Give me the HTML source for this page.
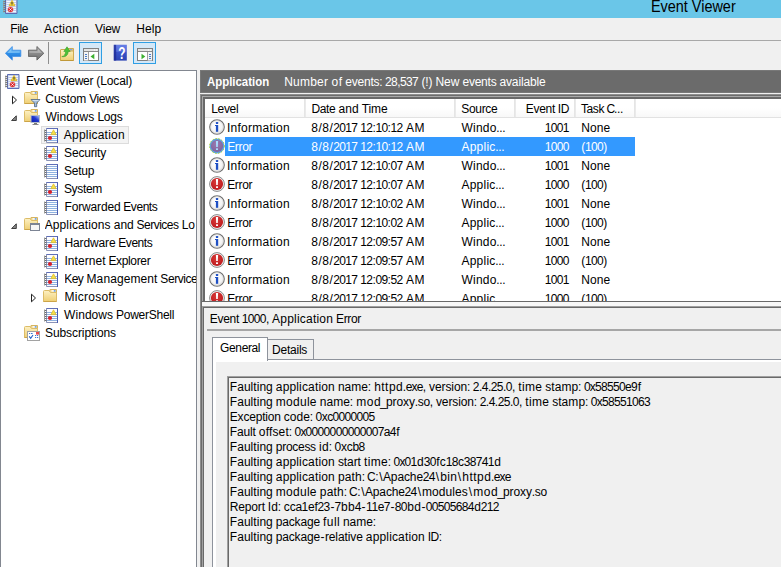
<!DOCTYPE html>
<html><head><meta charset="utf-8"><title>Event Viewer</title>
<style>
*{box-sizing:border-box;margin:0;padding:0}
html,body{width:781px;height:567px;overflow:hidden;background:#f0f0f0}
body{font-family:"Liberation Sans",sans-serif;font-size:12px;color:#000;position:relative}
.abs{position:absolute}
.ic{position:absolute;display:block}
.t{position:absolute;white-space:nowrap;transform-origin:0 0}
.tbbtn{position:absolute;width:23px;height:22px;top:42px;background:#d4e8f8;border:1px solid #2f9fe4}
</style></head><body>
<svg width="0" height="0" style="position:absolute"><defs>
<linearGradient id="gf" x1="0" y1="0" x2="0" y2="1"><stop offset="0" stop-color="#fdf1c4"/><stop offset="1" stop-color="#efcf74"/></linearGradient>
<radialGradient id="gi" cx=".4" cy=".35" r=".8"><stop offset="0" stop-color="#ffffff"/><stop offset=".6" stop-color="#f4f4f4"/><stop offset="1" stop-color="#c8c8c8"/></radialGradient>
<radialGradient id="ge" cx=".45" cy=".35" r=".8"><stop offset="0" stop-color="#d83a38"/><stop offset="1" stop-color="#b81418"/></radialGradient>
<radialGradient id="gs" cx=".45" cy=".35" r=".8"><stop offset="0" stop-color="#9a7ab0"/><stop offset="1" stop-color="#7a5e98"/></radialGradient>
<linearGradient id="gb" x1="0" y1="0" x2="0" y2="1"><stop offset="0" stop-color="#7cc4f8"/><stop offset=".5" stop-color="#2f8fe8"/><stop offset="1" stop-color="#1a6fd0"/></linearGradient>
<linearGradient id="gg" x1="0" y1="0" x2="0" y2="1"><stop offset="0" stop-color="#b4b4b4"/><stop offset=".5" stop-color="#8a8a8a"/><stop offset="1" stop-color="#6e6e6e"/></linearGradient>
<linearGradient id="gh" x1="0" y1="0" x2="0" y2="1"><stop offset="0" stop-color="#5c78e4"/><stop offset=".5" stop-color="#3852c8"/><stop offset="1" stop-color="#2c44b4"/></linearGradient>
<linearGradient id="gm" x1="0" y1="1" x2="1" y2="0"><stop offset="0" stop-color="#0c1ca8"/><stop offset=".55" stop-color="#2038d0"/><stop offset="1" stop-color="#b8d0f8"/></linearGradient>
</defs></svg>
<div class="abs" style="left:0;top:0;width:781px;height:18px;background:#6ac6e8"></div>

<svg class="ic" style="left:3px;top:-2px" width="16" height="16" viewBox="0 0 16 16"><path d="M2.500 1.500h11.500v14h-11.500z" fill="#c2cfec" stroke="#5c6cb4"/><path d="M3.500 3.500h9.500M3.500 5.500h9.500M3.500 7.500h9.500M3.500 9.500h9.500M3.500 11.500h9.500M3.500 13.500h9.500" stroke="#f2f6ff" stroke-width="1"/><path d="M0 3.500h2.500M0 5.500h2.500M0 7.500h2.500M0 9.500h2.500M0 11.500h2.500M0 13.500h2.500" stroke="#6e6e6e" stroke-width="1"/><path d="M.8 2.500v12" stroke="#9a9a9a" stroke-width="1"/><path d="M9 2.300l3 5.400h-6z" fill="#f6d838" stroke="#d8ac18" stroke-width=".7" stroke-linejoin="round"/><rect x="8.500" y="4" width="1" height="2" fill="#333"/><rect x="8.500" y="6.400" width="1" height=".8" fill="#333"/><circle cx="7.500" cy="11.500" r="2.600" fill="#d8262c" stroke="#e87070" stroke-width=".5"/><path d="M6.400 10.400l2.200 2.200M8.600 10.400l-2.200 2.200" stroke="#fff" stroke-width=".9"/></svg>
<div class="t" style="left:651.00px;top:-3.04px;font-size:16px;line-height:20px;height:20px;transform:scaleX(0.9011)">Event Viewer</div>
<div class="t" style="left:10.30px;top:21.44px;line-height:16px;height:16px"><span style="letter-spacing:-0.34px;margin:0 0.17px 0 -0.17px">File</span></div>
<div class="t" style="left:44.10px;top:21.44px;line-height:16px;height:16px"><span style="letter-spacing:0.28px">Action</span></div>
<div class="t" style="left:95.10px;top:21.44px;line-height:16px;height:16px"><span style="letter-spacing:-0.20px">View</span></div>
<div class="t" style="left:136.30px;top:21.44px;line-height:16px;height:16px"><span style="letter-spacing:0.08px">Help</span></div>
<div class="abs" style="left:0;top:40px;width:781px;height:1px;background:#a8a8a8"></div>
<svg class="ic" style="left:5px;top:46px" width="17" height="15" viewBox="0 0 17 15"><path d="M.4 7.300L7.300.5v3.700H15.800v6.200H7.300v3.700z" fill="url(#gb)" stroke="#3a8ee8" stroke-width=".8" stroke-linejoin="round"/><path d="M2.200 7l4.200-4.200v2.400h8.400v1.600z" fill="#a8e0ff" opacity=".55"/></svg>
<svg class="ic" style="left:28px;top:46px" width="17" height="15" viewBox="0 0 17 15"><path d="M15.800 7.300L8.900.5v3.700H.4v6.200H8.900v3.700z" fill="url(#gg)" stroke="#606060" stroke-width=".9" stroke-linejoin="round"/><path d="M14 7l-4.200-4.200v2.400H1.400v1.600z" fill="#d0d0d0" opacity=".5"/></svg>
<div class="abs" style="left:48px;top:42px;width:1px;height:22px;background:#8e8e8e"></div>
<svg class="ic" style="left:59px;top:45px" width="16" height="16" viewBox="0 0 16 16"><path d="M8 3.500h6.500v4h-7z" fill="#f1d585" stroke="#d0aa50"/><rect x="11" y="4.200" width="2.500" height="1.200" fill="#6a9af0"/><path d="M1.500 5q0-.5.500-.5h4.500l1.500 1.500h6.500v9.500h-13z" fill="url(#gf)" stroke="#d0aa50"/><path d="M1.500 15.500h13" stroke="#c09838"/><path d="M2.800 11.600c2.400-.3 3.600-2 3.900-5.200h-1.900l3.200-4.600 3.200 4.600h-1.900c-.4 4-2.700 5.800-6.500 5.200z" fill="#4cc038" stroke="#38a028" stroke-width=".6"/></svg>
<div class="tbbtn" style="left:79px"></div>
<svg class="ic" style="left:83px;top:48px" width="16" height="13" viewBox="0 0 16 13"><rect x=".5" y=".5" width="15" height="12" fill="#fff" stroke="#808080"/><rect x="1" y="1" width="14" height="2.500" fill="#e4e4e4"/><path d="M11 2h1M13 2h1" stroke="#fff"/><path d="M1 3.500h14" stroke="#8a8a8a"/><path d="M5.500 4v8.500" stroke="#a0a0a0"/><rect x="1" y="4" width="4" height="8.500" fill="#f4f4f4"/><path d="M2 6.500h2M2 8.500h2M2 10.500h2" stroke="#4a7cc8"/><path d="M11.300 5.800v5.400l-3.800-2.700z" fill="#3cb030"/></svg>
<svg class="ic" style="left:113px;top:44px" width="15" height="17" viewBox="0 0 15 17"><rect x=".8" y=".8" width="13" height="15.800" fill="url(#gh)"/><rect x=".8" y=".8" width="2.400" height="15.800" fill="#1c2890" opacity=".7"/><rect x="3.200" y=".8" width="10.600" height="7" fill="#7088e8" opacity=".45"/><text transform="translate(8.800 14.600) scale(.74 1)" font-family="Liberation Sans,sans-serif" font-weight="bold" font-size="16" fill="#fff" text-anchor="middle">?</text></svg>
<div class="tbbtn" style="left:133px"></div>
<svg class="ic" style="left:137px;top:48px" width="16" height="13" viewBox="0 0 16 13"><rect x=".5" y=".5" width="15" height="12" fill="#fff" stroke="#808080"/><rect x="1" y="1" width="14" height="2.500" fill="#e4e4e4"/><path d="M11 2h1M13 2h1" stroke="#fff"/><path d="M1 3.500h14" stroke="#8a8a8a"/><path d="M10.500 4v8.500" stroke="#a0a0a0"/><rect x="11" y="4" width="4" height="8.500" fill="#f4f4f4"/><path d="M12 6.500h2M12 8.500h2M12 10.500h2" stroke="#4a7cc8"/><path d="M4.500 5.800v5.400l3.800-2.700z" fill="#3cb030"/></svg>

<div class="abs" style="left:0;top:70px;width:197px;height:500px;background:#fff;border:1px solid #828790"></div>
<div class="abs" style="left:41px;top:126px;width:88px;height:18px;background:#f3f3f3;border:1px solid #dcdcdc"></div>
<svg class="ic" style="left:5px;top:73px" width="16" height="16" viewBox="0 0 16 16"><path d="M2.500 1.500h11.500v14h-11.500z" fill="#c2cfec" stroke="#5c6cb4"/><path d="M3.500 3.500h9.500M3.500 5.500h9.500M3.500 7.500h9.500M3.500 9.500h9.500M3.500 11.500h9.500M3.500 13.500h9.500" stroke="#f2f6ff" stroke-width="1"/><path d="M0 3.500h2.500M0 5.500h2.500M0 7.500h2.500M0 9.500h2.500M0 11.500h2.500M0 13.500h2.500" stroke="#6e6e6e" stroke-width="1"/><path d="M.8 2.500v12" stroke="#9a9a9a" stroke-width="1"/><path d="M9 2.300l3 5.400h-6z" fill="#f6d838" stroke="#d8ac18" stroke-width=".7" stroke-linejoin="round"/><rect x="8.500" y="4" width="1" height="2" fill="#333"/><rect x="8.500" y="6.400" width="1" height=".8" fill="#333"/><circle cx="7.500" cy="11.500" r="2.600" fill="#d8262c" stroke="#e87070" stroke-width=".5"/><path d="M6.400 10.400l2.200 2.200M8.600 10.400l-2.200 2.200" stroke="#fff" stroke-width=".9"/></svg>
<div class="t" style="left:26.20px;top:72.84px;line-height:16px;height:16px"><span style="letter-spacing:-0.33px;margin:0 0.17px 0 -0.17px">Event</span><span style="letter-spacing:-0.33px;margin:0 0.16px 0 -0.16px"> </span><span style="letter-spacing:-0.24px">Viewer</span><span style="letter-spacing:-0.33px;margin:0 0.16px 0 -0.16px"> </span>(<span style="letter-spacing:-0.14px">Local</span>)</div>
<svg class="ic" style="left:24px;top:91px" width="17" height="17" viewBox="0 0 17 17"><path d="M7 .5h6.500v4h-7.500z" fill="#f3d98e" stroke="#d6b460"/><rect x="8.500" y="1.200" width="4" height="1.400" fill="#fff"/><rect x="10.800" y="1.200" width="1.700" height="1.400" fill="#4a90f0"/><path d="M.5 2.500q0-1 1-1h4.500l1.500 2h6v9h-13z" fill="url(#gf)" stroke="#dcbc68"/><path d="M.5 12.500h13" stroke="#cca448"/><path d="M7 8.500h9l-3.300 3.600v3.600h-2.200v-3.600z" fill="#a4bcd8" stroke="#4c6484" stroke-width=".8"/><path d="M8.500 9.500h6" stroke="#dce8f4" stroke-width=".8"/></svg>
<div class="t" style="left:45.30px;top:90.84px;line-height:16px;height:16px"><span style="letter-spacing:-0.06px">Custom</span><span style="letter-spacing:-0.33px;margin:0 0.16px 0 -0.16px"> </span><span style="letter-spacing:-0.36px;margin:0 0.18px 0 -0.18px">Views</span></div>
<svg class="ic" style="left:10px;top:95px" width="9" height="10" viewBox="0 0 9 10"><path d="M2.500 1.200L6.500 5 2.500 8.800z" fill="#fff" stroke="#222" stroke-width="1"/></svg>
<svg class="ic" style="left:24px;top:109px" width="17" height="17" viewBox="0 0 17 17"><path d="M7 .5h6.500v4h-7.500z" fill="#f3d98e" stroke="#d6b460"/><rect x="8.500" y="1.200" width="4" height="1.400" fill="#fff"/><rect x="10.800" y="1.200" width="1.700" height="1.400" fill="#4a90f0"/><path d="M.5 2.500q0-1 1-1h4.500l1.500 2h6v9h-13z" fill="url(#gf)" stroke="#dcbc68"/><path d="M.5 12.500h13" stroke="#cca448"/><rect x="7" y="6.500" width="8.500" height="7" fill="url(#gm)" stroke="#b4bcc8"/><path d="M10 14.500h3" stroke="#777"/><path d="M8.500 15.500h6" stroke="#888"/></svg>
<div class="t" style="left:45.40px;top:108.84px;line-height:16px;height:16px"><span style="letter-spacing:0.04px">Windows</span><span style="letter-spacing:-0.33px;margin:0 0.16px 0 -0.16px"> </span><span style="letter-spacing:-0.25px">Logs</span></div>
<svg class="ic" style="left:10px;top:114px" width="8" height="8" viewBox="0 0 8 8"><path d="M6.300 1.800v4.700H1.600z" fill="#8a8a8a" stroke="#303030" stroke-width=".9"/></svg>
<svg class="ic" style="left:43px;top:127px" width="16" height="16" viewBox="0 0 16 16"><path d="M3.500 1.500h11v14h-11z" fill="#fdfdff" stroke="#8a93b8"/><path d="M14.500 1v15" stroke="#4a5cb0" stroke-width="1"/><path d="M3.500 1.500h11" stroke="#5f6fb8"/><path d="M4 5.500h10M4 7.500h10M4 9.500h10M4 11.500h10M4 13.500h10" stroke="#8fb2e0" stroke-width="1"/><path d="M1 3.500h2.500M1 5.500h2.500M1 7.500h2.500M1 9.500h2.500M1 11.500h2.500M1 13.500h2.500" stroke="#6e6e6e" stroke-width="1"/><path d="M1.500 2.500v12" stroke="#9a9a9a" stroke-width="1"/><path d="M10.500 2.800l2.600 4.800h-5.200z" fill="#f6e04a" stroke="#e0bc20" stroke-width=".7" stroke-linejoin="round"/><circle cx="7" cy="11" r="2.100" fill="#d8202a"/></svg>
<div class="t" style="left:63.80px;top:126.84px;line-height:16px;height:16px"><span style="letter-spacing:0.21px">Application</span></div>
<svg class="ic" style="left:43px;top:145px" width="16" height="16" viewBox="0 0 16 16"><path d="M3.500 1.500h11v14h-11z" fill="#fdfdff" stroke="#8a93b8"/><path d="M14.500 1v15" stroke="#4a5cb0" stroke-width="1"/><path d="M3.500 1.500h11" stroke="#5f6fb8"/><path d="M4 5.500h10M4 7.500h10M4 9.500h10M4 11.500h10M4 13.500h10" stroke="#8fb2e0" stroke-width="1"/><path d="M1 3.500h2.500M1 5.500h2.500M1 7.500h2.500M1 9.500h2.500M1 11.500h2.500M1 13.500h2.500" stroke="#6e6e6e" stroke-width="1"/><path d="M1.500 2.500v12" stroke="#9a9a9a" stroke-width="1"/><path d="M10.500 2.800l2.600 4.800h-5.200z" fill="#f6e04a" stroke="#e0bc20" stroke-width=".7" stroke-linejoin="round"/><circle cx="7" cy="11" r="2.100" fill="#d8202a"/></svg>
<div class="t" style="left:64.10px;top:144.84px;line-height:16px;height:16px"><span style="letter-spacing:-0.17px">Security</span></div>
<svg class="ic" style="left:43px;top:163px" width="16" height="16" viewBox="0 0 16 16"><path d="M3.500 1.500h11v14h-11z" fill="#fdfdff" stroke="#8a93b8"/><path d="M14.500 1v15" stroke="#4a5cb0" stroke-width="1"/><path d="M3.500 1.500h11" stroke="#5f6fb8"/><path d="M4 3.500h10M4 5.500h10M4 7.500h10M4 9.500h10M4 11.500h10M4 13.500h10" stroke="#8fb2e0" stroke-width="1"/><path d="M1 3.500h2.500M1 5.500h2.500M1 7.500h2.500M1 9.500h2.500M1 11.500h2.500M1 13.500h2.500" stroke="#6e6e6e" stroke-width="1"/><path d="M1.500 2.500v12" stroke="#9a9a9a" stroke-width="1"/></svg>
<div class="t" style="left:64.10px;top:162.84px;line-height:16px;height:16px"><span style="letter-spacing:-0.27px">Setup</span></div>
<svg class="ic" style="left:43px;top:181px" width="16" height="16" viewBox="0 0 16 16"><path d="M3.500 1.500h11v14h-11z" fill="#fdfdff" stroke="#8a93b8"/><path d="M14.500 1v15" stroke="#4a5cb0" stroke-width="1"/><path d="M3.500 1.500h11" stroke="#5f6fb8"/><path d="M4 5.500h10M4 7.500h10M4 9.500h10M4 11.500h10M4 13.500h10" stroke="#8fb2e0" stroke-width="1"/><path d="M1 3.500h2.500M1 5.500h2.500M1 7.500h2.500M1 9.500h2.500M1 11.500h2.500M1 13.500h2.500" stroke="#6e6e6e" stroke-width="1"/><path d="M1.500 2.500v12" stroke="#9a9a9a" stroke-width="1"/><path d="M10.500 2.800l2.600 4.800h-5.200z" fill="#f6e04a" stroke="#e0bc20" stroke-width=".7" stroke-linejoin="round"/><circle cx="7" cy="11" r="2.100" fill="#d8202a"/></svg>
<div class="t" style="left:64.10px;top:180.84px;line-height:16px;height:16px"><span style="letter-spacing:-0.33px;margin:0 0.17px 0 -0.17px">System</span></div>
<svg class="ic" style="left:43px;top:199px" width="16" height="16" viewBox="0 0 16 16"><path d="M3.500 1.500h11v14h-11z" fill="#fdfdff" stroke="#8a93b8"/><path d="M14.500 1v15" stroke="#4a5cb0" stroke-width="1"/><path d="M3.500 1.500h11" stroke="#5f6fb8"/><path d="M4 3.500h10M4 5.500h10M4 7.500h10M4 9.500h10M4 11.500h10M4 13.500h10" stroke="#8fb2e0" stroke-width="1"/><path d="M1 3.500h2.500M1 5.500h2.500M1 7.500h2.500M1 9.500h2.500M1 11.500h2.500M1 13.500h2.500" stroke="#6e6e6e" stroke-width="1"/><path d="M1.500 2.500v12" stroke="#9a9a9a" stroke-width="1"/></svg>
<div class="t" style="left:64.50px;top:198.84px;line-height:16px;height:16px"><span style="letter-spacing:-0.15px">Forwarded</span><span style="letter-spacing:-0.33px;margin:0 0.16px 0 -0.16px"> </span><span style="letter-spacing:-0.45px;margin:0 0.22px 0 -0.22px">Events</span></div>
<svg class="ic" style="left:24px;top:217px" width="17" height="17" viewBox="0 0 17 17"><path d="M7 .5h6.500v4h-7.500z" fill="#f3d98e" stroke="#d6b460"/><rect x="8.500" y="1.200" width="4" height="1.400" fill="#fff"/><rect x="10.800" y="1.200" width="1.700" height="1.400" fill="#4a90f0"/><path d="M.5 2.500q0-1 1-1h4.500l1.500 2h6v9h-13z" fill="url(#gf)" stroke="#dcbc68"/><path d="M.5 12.500h13" stroke="#cca448"/><rect x="6.500" y="6.500" width="9" height="7" fill="#f6f6f6" stroke="#7c8494"/><rect x="6" y="6" width="10" height="2" fill="#7c8494"/></svg>
<div class="t" style="left:44.70px;top:216.84px;line-height:16px;height:16px;width:150.80px;overflow:hidden"><span style="letter-spacing:0.11px">Applications</span><span style="letter-spacing:-0.33px;margin:0 0.16px 0 -0.16px"> </span>and<span style="letter-spacing:-0.33px;margin:0 0.16px 0 -0.16px"> </span><span style="letter-spacing:-0.50px;margin:0 0.25px 0 -0.25px">Services</span><span style="letter-spacing:-0.33px;margin:0 0.16px 0 -0.16px"> </span><span style="letter-spacing:-0.17px">Lo</span></div>
<svg class="ic" style="left:10px;top:222px" width="8" height="8" viewBox="0 0 8 8"><path d="M6.300 1.800v4.700H1.600z" fill="#8a8a8a" stroke="#303030" stroke-width=".9"/></svg>
<svg class="ic" style="left:43px;top:235px" width="16" height="16" viewBox="0 0 16 16"><path d="M3.500 1.500h11v14h-11z" fill="#fdfdff" stroke="#8a93b8"/><path d="M14.500 1v15" stroke="#4a5cb0" stroke-width="1"/><path d="M3.500 1.500h11" stroke="#5f6fb8"/><path d="M4 5.500h10M4 7.500h10M4 9.500h10M4 11.500h10M4 13.500h10" stroke="#8fb2e0" stroke-width="1"/><path d="M1 3.500h2.500M1 5.500h2.500M1 7.500h2.500M1 9.500h2.500M1 11.500h2.500M1 13.500h2.500" stroke="#6e6e6e" stroke-width="1"/><path d="M1.500 2.500v12" stroke="#9a9a9a" stroke-width="1"/><path d="M10.500 2.800l2.600 4.800h-5.200z" fill="#f6e04a" stroke="#e0bc20" stroke-width=".7" stroke-linejoin="round"/><circle cx="7" cy="11" r="2.100" fill="#d8202a"/></svg>
<div class="t" style="left:64.50px;top:234.84px;line-height:16px;height:16px"><span style="letter-spacing:-0.13px">Hardware</span><span style="letter-spacing:-0.33px;margin:0 0.16px 0 -0.16px"> </span><span style="letter-spacing:-0.45px;margin:0 0.22px 0 -0.22px">Events</span></div>
<svg class="ic" style="left:43px;top:253px" width="16" height="16" viewBox="0 0 16 16"><path d="M3.500 1.500h11v14h-11z" fill="#fdfdff" stroke="#8a93b8"/><path d="M14.500 1v15" stroke="#4a5cb0" stroke-width="1"/><path d="M3.500 1.500h11" stroke="#5f6fb8"/><path d="M4 5.500h10M4 7.500h10M4 9.500h10M4 11.500h10M4 13.500h10" stroke="#8fb2e0" stroke-width="1"/><path d="M1 3.500h2.500M1 5.500h2.500M1 7.500h2.500M1 9.500h2.500M1 11.500h2.500M1 13.500h2.500" stroke="#6e6e6e" stroke-width="1"/><path d="M1.500 2.500v12" stroke="#9a9a9a" stroke-width="1"/><path d="M10.500 2.800l2.600 4.800h-5.200z" fill="#f6e04a" stroke="#e0bc20" stroke-width=".7" stroke-linejoin="round"/><circle cx="7" cy="11" r="2.100" fill="#d8202a"/></svg>
<div class="t" style="left:64.50px;top:252.84px;line-height:16px;height:16px"><span style="letter-spacing:0.04px">Internet</span><span style="letter-spacing:-0.33px;margin:0 0.16px 0 -0.16px"> </span><span style="letter-spacing:-0.34px;margin:0 0.17px 0 -0.17px">Explorer</span></div>
<svg class="ic" style="left:43px;top:271px" width="16" height="16" viewBox="0 0 16 16"><path d="M3.500 1.500h11v14h-11z" fill="#fdfdff" stroke="#8a93b8"/><path d="M14.500 1v15" stroke="#4a5cb0" stroke-width="1"/><path d="M3.500 1.500h11" stroke="#5f6fb8"/><path d="M4 5.500h10M4 7.500h10M4 9.500h10M4 11.500h10M4 13.500h10" stroke="#8fb2e0" stroke-width="1"/><path d="M1 3.500h2.500M1 5.500h2.500M1 7.500h2.500M1 9.500h2.500M1 11.500h2.500M1 13.500h2.500" stroke="#6e6e6e" stroke-width="1"/><path d="M1.500 2.500v12" stroke="#9a9a9a" stroke-width="1"/><path d="M10.500 2.800l2.600 4.800h-5.200z" fill="#f6e04a" stroke="#e0bc20" stroke-width=".7" stroke-linejoin="round"/><circle cx="7" cy="11" r="2.100" fill="#d8202a"/></svg>
<div class="t" style="left:64.50px;top:270.84px;line-height:16px;height:16px;width:131.00px;overflow:hidden"><span style="letter-spacing:-0.56px;margin:0 0.28px 0 -0.28px">Key</span><span style="letter-spacing:-0.33px;margin:0 0.16px 0 -0.16px"> </span><span style="letter-spacing:0.10px">Management</span><span style="letter-spacing:-0.33px;margin:0 0.16px 0 -0.16px"> </span><span style="letter-spacing:-0.43px;margin:0 0.22px 0 -0.22px">Service</span></div>
<svg class="ic" style="left:43px;top:289px" width="17" height="17" viewBox="0 0 17 17"><path d="M7 .5h6.500v4h-7.500z" fill="#f3d98e" stroke="#d6b460"/><rect x="8.500" y="1.200" width="4" height="1.400" fill="#fff"/><rect x="10.800" y="1.200" width="1.700" height="1.400" fill="#4a90f0"/><path d="M.5 2.500q0-1 1-1h4.500l1.500 2h6v9h-13z" fill="url(#gf)" stroke="#dcbc68"/><path d="M.5 12.500h13" stroke="#cca448"/></svg>
<div class="t" style="left:64.50px;top:288.84px;line-height:16px;height:16px"><span style="letter-spacing:0.26px">Microsoft</span></div>
<svg class="ic" style="left:29px;top:293px" width="9" height="10" viewBox="0 0 9 10"><path d="M2.500 1.200L6.500 5 2.500 8.800z" fill="#fff" stroke="#222" stroke-width="1"/></svg>
<svg class="ic" style="left:43px;top:307px" width="16" height="16" viewBox="0 0 16 16"><path d="M3.500 1.500h11v14h-11z" fill="#fdfdff" stroke="#8a93b8"/><path d="M14.500 1v15" stroke="#4a5cb0" stroke-width="1"/><path d="M3.500 1.500h11" stroke="#5f6fb8"/><path d="M4 5.500h10M4 7.500h10M4 9.500h10M4 11.500h10M4 13.500h10" stroke="#8fb2e0" stroke-width="1"/><path d="M1 3.500h2.500M1 5.500h2.500M1 7.500h2.500M1 9.500h2.500M1 11.500h2.500M1 13.500h2.500" stroke="#6e6e6e" stroke-width="1"/><path d="M1.500 2.500v12" stroke="#9a9a9a" stroke-width="1"/><path d="M10.500 2.800l2.600 4.800h-5.200z" fill="#f6e04a" stroke="#e0bc20" stroke-width=".7" stroke-linejoin="round"/><circle cx="7" cy="11" r="2.100" fill="#d8202a"/></svg>
<div class="t" style="left:64.10px;top:306.84px;line-height:16px;height:16px"><span style="letter-spacing:0.04px">Windows</span><span style="letter-spacing:-0.33px;margin:0 0.16px 0 -0.16px"> </span><span style="letter-spacing:-0.27px">PowerShell</span></div>
<svg class="ic" style="left:24px;top:325px" width="17" height="17" viewBox="0 0 17 17"><path d="M7 .5h6.500v4h-7.500z" fill="#f3d98e" stroke="#d6b460"/><rect x="8.500" y="1.200" width="4" height="1.400" fill="#fff"/><rect x="10.800" y="1.200" width="1.700" height="1.400" fill="#4a90f0"/><path d="M.5 2.500q0-1 1-1h4.500l1.500 2h6v9h-13z" fill="url(#gf)" stroke="#dcbc68"/><path d="M.5 12.500h13" stroke="#cca448"/><rect x="3.500" y="6.500" width="12" height="9" fill="#fff" stroke="#a2a2a2"/><rect x="12" y="7" width="3" height="2.600" fill="#ea4c4c"/><path d="M5 8.500h1.200M7 8.500h1.600M11 10.500h1.200M13 10.500h1.200M11 12.500h1.200M13 12.500h1.200" stroke="#3a78d8" stroke-width="1.200"/><path d="M5.200 11.300l1.500 2 2.300-3.300" stroke="#2060c8" stroke-width="1.100" fill="none"/></svg>
<div class="t" style="left:45.00px;top:324.84px;line-height:16px;height:16px"><span style="letter-spacing:-0.08px">Subscriptions</span></div>
<div class="abs" style="left:200px;top:70px;width:581px;height:23px;background:#6b6b6b;border:1px solid #787878;border-right:0"></div>
<div class="t" style="left:207.20px;top:73.64px;font-size:12px;line-height:16px;height:16px;transform:scaleX(0.9508);font-weight:bold;color:#fff">Application</div>
<div class="t" style="left:284.20px;top:73.64px;line-height:16px;height:16px;color:#fff"><span style="letter-spacing:0.22px">Number</span><span style="letter-spacing:-0.33px;margin:0 0.16px 0 -0.16px"> </span><span style="letter-spacing:0.50px;margin:0 -0.25px 0 0.25px">of</span><span style="letter-spacing:-0.33px;margin:0 0.16px 0 -0.16px"> </span><span style="letter-spacing:-0.22px">events</span><span style="letter-spacing:-0.33px;margin:0 0.16px 0 -0.16px">:</span><span style="letter-spacing:-0.33px;margin:0 0.16px 0 -0.16px"> </span><span style="letter-spacing:-0.67px;margin:0 0.34px 0 -0.34px">28</span><span style="letter-spacing:-0.33px;margin:0 0.16px 0 -0.16px">,</span><span style="letter-spacing:-0.67px;margin:0 0.34px 0 -0.34px">537</span><span style="letter-spacing:-0.33px;margin:0 0.16px 0 -0.16px"> </span><span style="letter-spacing:-0.11px">(!)</span><span style="letter-spacing:-0.33px;margin:0 0.16px 0 -0.16px"> </span>New<span style="letter-spacing:-0.33px;margin:0 0.16px 0 -0.16px"> </span><span style="letter-spacing:-0.22px">events</span><span style="letter-spacing:-0.33px;margin:0 0.16px 0 -0.16px"> </span><span style="letter-spacing:-0.15px">available</span></div>
<div class="abs" style="left:200px;top:94px;width:581px;height:480px;background:#8e8e8e"></div>
<div class="abs" style="left:201px;top:95px;width:580px;height:480px;background:#6c6c6c"></div>
<div class="abs" style="left:202px;top:96px;width:579px;height:480px;background:#a8a8a8"></div>
<div class="abs" style="left:203px;top:97px;width:578px;height:205px;background:#696969"></div>
<div class="abs" style="left:205px;top:99px;width:576px;height:202px;background:#fff;overflow:hidden" id="list"></div>
<div class="abs" style="left:205px;top:99px;width:576px;height:18px;background:linear-gradient(#fff,#fff 50%,#f8f8f8)"></div>
<div class="abs" style="left:205px;top:117px;width:576px;height:1px;background:#e2e2e2"></div>
<div class="abs" style="left:304px;top:99px;width:2px;height:18px;background:linear-gradient(90deg,#e3e3e3,#ececec)"></div>
<div class="abs" style="left:454px;top:99px;width:2px;height:18px;background:linear-gradient(90deg,#e3e3e3,#ececec)"></div>
<div class="abs" style="left:514px;top:99px;width:2px;height:18px;background:linear-gradient(90deg,#e3e3e3,#ececec)"></div>
<div class="abs" style="left:574px;top:99px;width:2px;height:18px;background:linear-gradient(90deg,#e3e3e3,#ececec)"></div>
<div class="abs" style="left:634px;top:99px;width:2px;height:18px;background:linear-gradient(90deg,#e3e3e3,#ececec)"></div>
<div class="t" style="left:211.40px;top:100.64px;line-height:16px;height:16px"><span style="letter-spacing:-0.34px;margin:0 0.17px 0 -0.17px">Level</span></div>
<div class="t" style="left:311.60px;top:100.64px;line-height:16px;height:16px"><span style="letter-spacing:-0.34px;margin:0 0.17px 0 -0.17px">Date</span><span style="letter-spacing:-0.33px;margin:0 0.16px 0 -0.16px"> </span>and<span style="letter-spacing:-0.33px;margin:0 0.16px 0 -0.16px"> </span><span style="letter-spacing:-0.06px">Time</span></div>
<div class="t" style="left:461.50px;top:100.64px;line-height:16px;height:16px"><span style="letter-spacing:-0.34px;margin:0 0.17px 0 -0.17px">Source</span></div>
<div class="t" style="left:526.00px;top:100.64px;line-height:16px;height:16px"><span style="letter-spacing:-0.33px;margin:0 0.17px 0 -0.17px">Event</span><span style="letter-spacing:-0.33px;margin:0 0.16px 0 -0.16px"> </span><span style="letter-spacing:-0.50px;margin:0 0.25px 0 -0.25px">ID</span></div>
<div class="t" style="left:581.20px;top:100.64px;line-height:16px;height:16px"><span style="letter-spacing:-0.42px;margin:0 0.21px 0 -0.21px">Task</span><span style="letter-spacing:-0.33px;margin:0 0.16px 0 -0.16px"> </span><span style="letter-spacing:-1.67px;margin:0 0.84px 0 -0.84px">C</span><span style="letter-spacing:-0.33px;margin:0 0.16px 0 -0.16px">...</span></div>
<div class="abs" style="left:225px;top:137px;width:410px;height:19px;background:#3399ff"></div>
<svg class="ic" style="left:209px;top:119px" width="16" height="16" viewBox="0 0 16 16"><circle cx="8" cy="8" r="7.200" fill="url(#gi)" stroke="#727272" stroke-width="1.300"/><circle cx="8" cy="8" r="6.300" fill="none" stroke="#dcdcdc" stroke-width=".8"/><rect x="6.900" y="6" width="2.300" height="6.800" fill="#1f50c4"/><rect x="6" y="6" width="1.500" height="1" fill="#1f50c4"/><rect x="6.900" y="2.900" width="2.300" height="2.100" rx=".6" fill="#1f50c4"/></svg>
<div class="t" style="left:226.90px;top:119.54px;line-height:16px;height:16px"><span style="letter-spacing:0.27px">Information</span></div>
<div class="t" style="left:311.60px;top:119.54px;line-height:16px;height:16px"><span style="letter-spacing:-0.67px;margin:0 0.34px 0 -0.34px">8</span><span style="letter-spacing:1.67px;margin:0 -0.84px 0 0.84px">/</span><span style="letter-spacing:-0.67px;margin:0 0.34px 0 -0.34px">8</span><span style="letter-spacing:1.67px;margin:0 -0.84px 0 0.84px">/</span><span style="letter-spacing:-0.67px;margin:0 0.34px 0 -0.34px">2017</span><span style="letter-spacing:-0.33px;margin:0 0.16px 0 -0.16px"> </span><span style="letter-spacing:-0.67px;margin:0 0.34px 0 -0.34px">12</span><span style="letter-spacing:-0.33px;margin:0 0.16px 0 -0.16px">:</span><span style="letter-spacing:-0.67px;margin:0 0.34px 0 -0.34px">10</span><span style="letter-spacing:-0.33px;margin:0 0.16px 0 -0.16px">:</span><span style="letter-spacing:-0.67px;margin:0 0.34px 0 -0.34px">12</span><span style="letter-spacing:-0.33px;margin:0 0.16px 0 -0.16px"> </span><span style="letter-spacing:0.50px;margin:0 -0.25px 0 0.25px">AM</span></div>
<div class="t" style="left:461.50px;top:119.54px;line-height:16px;height:16px"><span style="letter-spacing:0.20px">Windo</span><span style="letter-spacing:-0.33px;margin:0 0.16px 0 -0.16px">...</span></div>
<div class="t" style="left:545.20px;top:119.54px;line-height:16px;height:16px"><span style="letter-spacing:-0.67px;margin:0 0.34px 0 -0.34px">1001</span></div>
<div class="t" style="left:581.30px;top:119.54px;line-height:16px;height:16px"><span style="letter-spacing:0.08px">None</span></div>
<svg class="ic" style="left:209px;top:138px" width="16" height="16" viewBox="0 0 16 16"><circle cx="8" cy="8" r="7.400" fill="#5aa0e8" stroke="#a8d020" stroke-width="1" stroke-dasharray="1.500 1.500"/><circle cx="8" cy="8" r="6.100" fill="url(#gs)"/><path d="M6.900 3h2.200l-.3 6h-1.600z" fill="#a8dcff"/><rect x="7" y="10.200" width="2" height="1.900" rx=".5" fill="#a8dcff"/></svg>
<div class="t" style="left:227.30px;top:138.54px;line-height:16px;height:16px;color:#fff"><span style="letter-spacing:-0.33px;margin:0 0.17px 0 -0.17px">Error</span></div>
<div class="t" style="left:311.60px;top:138.54px;line-height:16px;height:16px;color:#fff"><span style="letter-spacing:-0.67px;margin:0 0.34px 0 -0.34px">8</span><span style="letter-spacing:1.67px;margin:0 -0.84px 0 0.84px">/</span><span style="letter-spacing:-0.67px;margin:0 0.34px 0 -0.34px">8</span><span style="letter-spacing:1.67px;margin:0 -0.84px 0 0.84px">/</span><span style="letter-spacing:-0.67px;margin:0 0.34px 0 -0.34px">2017</span><span style="letter-spacing:-0.33px;margin:0 0.16px 0 -0.16px"> </span><span style="letter-spacing:-0.67px;margin:0 0.34px 0 -0.34px">12</span><span style="letter-spacing:-0.33px;margin:0 0.16px 0 -0.16px">:</span><span style="letter-spacing:-0.67px;margin:0 0.34px 0 -0.34px">10</span><span style="letter-spacing:-0.33px;margin:0 0.16px 0 -0.16px">:</span><span style="letter-spacing:-0.67px;margin:0 0.34px 0 -0.34px">12</span><span style="letter-spacing:-0.33px;margin:0 0.16px 0 -0.16px"> </span><span style="letter-spacing:0.50px;margin:0 -0.25px 0 0.25px">AM</span></div>
<div class="t" style="left:461.50px;top:138.54px;line-height:16px;height:16px;color:#fff"><span style="letter-spacing:0.22px">Applic</span><span style="letter-spacing:-0.33px;margin:0 0.16px 0 -0.16px">...</span></div>
<div class="t" style="left:545.20px;top:138.54px;line-height:16px;height:16px;color:#fff"><span style="letter-spacing:-0.67px;margin:0 0.34px 0 -0.34px">1000</span></div>
<div class="t" style="left:581.30px;top:138.54px;line-height:16px;height:16px;color:#fff">(<span style="letter-spacing:-0.67px;margin:0 0.34px 0 -0.34px">100</span>)</div>
<svg class="ic" style="left:209px;top:157px" width="16" height="16" viewBox="0 0 16 16"><circle cx="8" cy="8" r="7.200" fill="url(#gi)" stroke="#727272" stroke-width="1.300"/><circle cx="8" cy="8" r="6.300" fill="none" stroke="#dcdcdc" stroke-width=".8"/><rect x="6.900" y="6" width="2.300" height="6.800" fill="#1f50c4"/><rect x="6" y="6" width="1.500" height="1" fill="#1f50c4"/><rect x="6.900" y="2.900" width="2.300" height="2.100" rx=".6" fill="#1f50c4"/></svg>
<div class="t" style="left:226.90px;top:157.54px;line-height:16px;height:16px"><span style="letter-spacing:0.27px">Information</span></div>
<div class="t" style="left:311.60px;top:157.54px;line-height:16px;height:16px"><span style="letter-spacing:-0.67px;margin:0 0.34px 0 -0.34px">8</span><span style="letter-spacing:1.67px;margin:0 -0.84px 0 0.84px">/</span><span style="letter-spacing:-0.67px;margin:0 0.34px 0 -0.34px">8</span><span style="letter-spacing:1.67px;margin:0 -0.84px 0 0.84px">/</span><span style="letter-spacing:-0.67px;margin:0 0.34px 0 -0.34px">2017</span><span style="letter-spacing:-0.33px;margin:0 0.16px 0 -0.16px"> </span><span style="letter-spacing:-0.67px;margin:0 0.34px 0 -0.34px">12</span><span style="letter-spacing:-0.33px;margin:0 0.16px 0 -0.16px">:</span><span style="letter-spacing:-0.67px;margin:0 0.34px 0 -0.34px">10</span><span style="letter-spacing:-0.33px;margin:0 0.16px 0 -0.16px">:</span><span style="letter-spacing:-0.67px;margin:0 0.34px 0 -0.34px">07</span><span style="letter-spacing:-0.33px;margin:0 0.16px 0 -0.16px"> </span><span style="letter-spacing:0.50px;margin:0 -0.25px 0 0.25px">AM</span></div>
<div class="t" style="left:461.50px;top:157.54px;line-height:16px;height:16px"><span style="letter-spacing:0.20px">Windo</span><span style="letter-spacing:-0.33px;margin:0 0.16px 0 -0.16px">...</span></div>
<div class="t" style="left:545.20px;top:157.54px;line-height:16px;height:16px"><span style="letter-spacing:-0.67px;margin:0 0.34px 0 -0.34px">1001</span></div>
<div class="t" style="left:581.30px;top:157.54px;line-height:16px;height:16px"><span style="letter-spacing:0.08px">None</span></div>
<svg class="ic" style="left:209px;top:176px" width="16" height="16" viewBox="0 0 16 16"><circle cx="8" cy="8" r="7.400" fill="#f0f0f0" stroke="#8a8a8a" stroke-width="1"/><circle cx="8" cy="8" r="6.100" fill="url(#ge)"/><path d="M6.900 3h2.200l-.3 6h-1.600z" fill="#fff"/><rect x="7" y="10.200" width="2" height="1.900" rx=".5" fill="#fff"/></svg>
<div class="t" style="left:227.30px;top:176.54px;line-height:16px;height:16px"><span style="letter-spacing:-0.33px;margin:0 0.17px 0 -0.17px">Error</span></div>
<div class="t" style="left:311.60px;top:176.54px;line-height:16px;height:16px"><span style="letter-spacing:-0.67px;margin:0 0.34px 0 -0.34px">8</span><span style="letter-spacing:1.67px;margin:0 -0.84px 0 0.84px">/</span><span style="letter-spacing:-0.67px;margin:0 0.34px 0 -0.34px">8</span><span style="letter-spacing:1.67px;margin:0 -0.84px 0 0.84px">/</span><span style="letter-spacing:-0.67px;margin:0 0.34px 0 -0.34px">2017</span><span style="letter-spacing:-0.33px;margin:0 0.16px 0 -0.16px"> </span><span style="letter-spacing:-0.67px;margin:0 0.34px 0 -0.34px">12</span><span style="letter-spacing:-0.33px;margin:0 0.16px 0 -0.16px">:</span><span style="letter-spacing:-0.67px;margin:0 0.34px 0 -0.34px">10</span><span style="letter-spacing:-0.33px;margin:0 0.16px 0 -0.16px">:</span><span style="letter-spacing:-0.67px;margin:0 0.34px 0 -0.34px">07</span><span style="letter-spacing:-0.33px;margin:0 0.16px 0 -0.16px"> </span><span style="letter-spacing:0.50px;margin:0 -0.25px 0 0.25px">AM</span></div>
<div class="t" style="left:461.50px;top:176.54px;line-height:16px;height:16px"><span style="letter-spacing:0.22px">Applic</span><span style="letter-spacing:-0.33px;margin:0 0.16px 0 -0.16px">...</span></div>
<div class="t" style="left:545.20px;top:176.54px;line-height:16px;height:16px"><span style="letter-spacing:-0.67px;margin:0 0.34px 0 -0.34px">1000</span></div>
<div class="t" style="left:581.30px;top:176.54px;line-height:16px;height:16px">(<span style="letter-spacing:-0.67px;margin:0 0.34px 0 -0.34px">100</span>)</div>
<svg class="ic" style="left:209px;top:195px" width="16" height="16" viewBox="0 0 16 16"><circle cx="8" cy="8" r="7.200" fill="url(#gi)" stroke="#727272" stroke-width="1.300"/><circle cx="8" cy="8" r="6.300" fill="none" stroke="#dcdcdc" stroke-width=".8"/><rect x="6.900" y="6" width="2.300" height="6.800" fill="#1f50c4"/><rect x="6" y="6" width="1.500" height="1" fill="#1f50c4"/><rect x="6.900" y="2.900" width="2.300" height="2.100" rx=".6" fill="#1f50c4"/></svg>
<div class="t" style="left:226.90px;top:195.54px;line-height:16px;height:16px"><span style="letter-spacing:0.27px">Information</span></div>
<div class="t" style="left:311.60px;top:195.54px;line-height:16px;height:16px"><span style="letter-spacing:-0.67px;margin:0 0.34px 0 -0.34px">8</span><span style="letter-spacing:1.67px;margin:0 -0.84px 0 0.84px">/</span><span style="letter-spacing:-0.67px;margin:0 0.34px 0 -0.34px">8</span><span style="letter-spacing:1.67px;margin:0 -0.84px 0 0.84px">/</span><span style="letter-spacing:-0.67px;margin:0 0.34px 0 -0.34px">2017</span><span style="letter-spacing:-0.33px;margin:0 0.16px 0 -0.16px"> </span><span style="letter-spacing:-0.67px;margin:0 0.34px 0 -0.34px">12</span><span style="letter-spacing:-0.33px;margin:0 0.16px 0 -0.16px">:</span><span style="letter-spacing:-0.67px;margin:0 0.34px 0 -0.34px">10</span><span style="letter-spacing:-0.33px;margin:0 0.16px 0 -0.16px">:</span><span style="letter-spacing:-0.67px;margin:0 0.34px 0 -0.34px">02</span><span style="letter-spacing:-0.33px;margin:0 0.16px 0 -0.16px"> </span><span style="letter-spacing:0.50px;margin:0 -0.25px 0 0.25px">AM</span></div>
<div class="t" style="left:461.50px;top:195.54px;line-height:16px;height:16px"><span style="letter-spacing:0.20px">Windo</span><span style="letter-spacing:-0.33px;margin:0 0.16px 0 -0.16px">...</span></div>
<div class="t" style="left:545.20px;top:195.54px;line-height:16px;height:16px"><span style="letter-spacing:-0.67px;margin:0 0.34px 0 -0.34px">1001</span></div>
<div class="t" style="left:581.30px;top:195.54px;line-height:16px;height:16px"><span style="letter-spacing:0.08px">None</span></div>
<svg class="ic" style="left:209px;top:214px" width="16" height="16" viewBox="0 0 16 16"><circle cx="8" cy="8" r="7.400" fill="#f0f0f0" stroke="#8a8a8a" stroke-width="1"/><circle cx="8" cy="8" r="6.100" fill="url(#ge)"/><path d="M6.900 3h2.200l-.3 6h-1.600z" fill="#fff"/><rect x="7" y="10.200" width="2" height="1.900" rx=".5" fill="#fff"/></svg>
<div class="t" style="left:227.30px;top:214.54px;line-height:16px;height:16px"><span style="letter-spacing:-0.33px;margin:0 0.17px 0 -0.17px">Error</span></div>
<div class="t" style="left:311.60px;top:214.54px;line-height:16px;height:16px"><span style="letter-spacing:-0.67px;margin:0 0.34px 0 -0.34px">8</span><span style="letter-spacing:1.67px;margin:0 -0.84px 0 0.84px">/</span><span style="letter-spacing:-0.67px;margin:0 0.34px 0 -0.34px">8</span><span style="letter-spacing:1.67px;margin:0 -0.84px 0 0.84px">/</span><span style="letter-spacing:-0.67px;margin:0 0.34px 0 -0.34px">2017</span><span style="letter-spacing:-0.33px;margin:0 0.16px 0 -0.16px"> </span><span style="letter-spacing:-0.67px;margin:0 0.34px 0 -0.34px">12</span><span style="letter-spacing:-0.33px;margin:0 0.16px 0 -0.16px">:</span><span style="letter-spacing:-0.67px;margin:0 0.34px 0 -0.34px">10</span><span style="letter-spacing:-0.33px;margin:0 0.16px 0 -0.16px">:</span><span style="letter-spacing:-0.67px;margin:0 0.34px 0 -0.34px">02</span><span style="letter-spacing:-0.33px;margin:0 0.16px 0 -0.16px"> </span><span style="letter-spacing:0.50px;margin:0 -0.25px 0 0.25px">AM</span></div>
<div class="t" style="left:461.50px;top:214.54px;line-height:16px;height:16px"><span style="letter-spacing:0.22px">Applic</span><span style="letter-spacing:-0.33px;margin:0 0.16px 0 -0.16px">...</span></div>
<div class="t" style="left:545.20px;top:214.54px;line-height:16px;height:16px"><span style="letter-spacing:-0.67px;margin:0 0.34px 0 -0.34px">1000</span></div>
<div class="t" style="left:581.30px;top:214.54px;line-height:16px;height:16px">(<span style="letter-spacing:-0.67px;margin:0 0.34px 0 -0.34px">100</span>)</div>
<svg class="ic" style="left:209px;top:233px" width="16" height="16" viewBox="0 0 16 16"><circle cx="8" cy="8" r="7.200" fill="url(#gi)" stroke="#727272" stroke-width="1.300"/><circle cx="8" cy="8" r="6.300" fill="none" stroke="#dcdcdc" stroke-width=".8"/><rect x="6.900" y="6" width="2.300" height="6.800" fill="#1f50c4"/><rect x="6" y="6" width="1.500" height="1" fill="#1f50c4"/><rect x="6.900" y="2.900" width="2.300" height="2.100" rx=".6" fill="#1f50c4"/></svg>
<div class="t" style="left:226.90px;top:233.54px;line-height:16px;height:16px"><span style="letter-spacing:0.27px">Information</span></div>
<div class="t" style="left:311.60px;top:233.54px;line-height:16px;height:16px"><span style="letter-spacing:-0.67px;margin:0 0.34px 0 -0.34px">8</span><span style="letter-spacing:1.67px;margin:0 -0.84px 0 0.84px">/</span><span style="letter-spacing:-0.67px;margin:0 0.34px 0 -0.34px">8</span><span style="letter-spacing:1.67px;margin:0 -0.84px 0 0.84px">/</span><span style="letter-spacing:-0.67px;margin:0 0.34px 0 -0.34px">2017</span><span style="letter-spacing:-0.33px;margin:0 0.16px 0 -0.16px"> </span><span style="letter-spacing:-0.67px;margin:0 0.34px 0 -0.34px">12</span><span style="letter-spacing:-0.33px;margin:0 0.16px 0 -0.16px">:</span><span style="letter-spacing:-0.67px;margin:0 0.34px 0 -0.34px">09</span><span style="letter-spacing:-0.33px;margin:0 0.16px 0 -0.16px">:</span><span style="letter-spacing:-0.67px;margin:0 0.34px 0 -0.34px">57</span><span style="letter-spacing:-0.33px;margin:0 0.16px 0 -0.16px"> </span><span style="letter-spacing:0.50px;margin:0 -0.25px 0 0.25px">AM</span></div>
<div class="t" style="left:461.50px;top:233.54px;line-height:16px;height:16px"><span style="letter-spacing:0.20px">Windo</span><span style="letter-spacing:-0.33px;margin:0 0.16px 0 -0.16px">...</span></div>
<div class="t" style="left:545.20px;top:233.54px;line-height:16px;height:16px"><span style="letter-spacing:-0.67px;margin:0 0.34px 0 -0.34px">1001</span></div>
<div class="t" style="left:581.30px;top:233.54px;line-height:16px;height:16px"><span style="letter-spacing:0.08px">None</span></div>
<svg class="ic" style="left:209px;top:252px" width="16" height="16" viewBox="0 0 16 16"><circle cx="8" cy="8" r="7.400" fill="#f0f0f0" stroke="#8a8a8a" stroke-width="1"/><circle cx="8" cy="8" r="6.100" fill="url(#ge)"/><path d="M6.900 3h2.200l-.3 6h-1.600z" fill="#fff"/><rect x="7" y="10.200" width="2" height="1.900" rx=".5" fill="#fff"/></svg>
<div class="t" style="left:227.30px;top:252.54px;line-height:16px;height:16px"><span style="letter-spacing:-0.33px;margin:0 0.17px 0 -0.17px">Error</span></div>
<div class="t" style="left:311.60px;top:252.54px;line-height:16px;height:16px"><span style="letter-spacing:-0.67px;margin:0 0.34px 0 -0.34px">8</span><span style="letter-spacing:1.67px;margin:0 -0.84px 0 0.84px">/</span><span style="letter-spacing:-0.67px;margin:0 0.34px 0 -0.34px">8</span><span style="letter-spacing:1.67px;margin:0 -0.84px 0 0.84px">/</span><span style="letter-spacing:-0.67px;margin:0 0.34px 0 -0.34px">2017</span><span style="letter-spacing:-0.33px;margin:0 0.16px 0 -0.16px"> </span><span style="letter-spacing:-0.67px;margin:0 0.34px 0 -0.34px">12</span><span style="letter-spacing:-0.33px;margin:0 0.16px 0 -0.16px">:</span><span style="letter-spacing:-0.67px;margin:0 0.34px 0 -0.34px">09</span><span style="letter-spacing:-0.33px;margin:0 0.16px 0 -0.16px">:</span><span style="letter-spacing:-0.67px;margin:0 0.34px 0 -0.34px">57</span><span style="letter-spacing:-0.33px;margin:0 0.16px 0 -0.16px"> </span><span style="letter-spacing:0.50px;margin:0 -0.25px 0 0.25px">AM</span></div>
<div class="t" style="left:461.50px;top:252.54px;line-height:16px;height:16px"><span style="letter-spacing:0.22px">Applic</span><span style="letter-spacing:-0.33px;margin:0 0.16px 0 -0.16px">...</span></div>
<div class="t" style="left:545.20px;top:252.54px;line-height:16px;height:16px"><span style="letter-spacing:-0.67px;margin:0 0.34px 0 -0.34px">1000</span></div>
<div class="t" style="left:581.30px;top:252.54px;line-height:16px;height:16px">(<span style="letter-spacing:-0.67px;margin:0 0.34px 0 -0.34px">100</span>)</div>
<svg class="ic" style="left:209px;top:271px" width="16" height="16" viewBox="0 0 16 16"><circle cx="8" cy="8" r="7.200" fill="url(#gi)" stroke="#727272" stroke-width="1.300"/><circle cx="8" cy="8" r="6.300" fill="none" stroke="#dcdcdc" stroke-width=".8"/><rect x="6.900" y="6" width="2.300" height="6.800" fill="#1f50c4"/><rect x="6" y="6" width="1.500" height="1" fill="#1f50c4"/><rect x="6.900" y="2.900" width="2.300" height="2.100" rx=".6" fill="#1f50c4"/></svg>
<div class="t" style="left:226.90px;top:271.54px;line-height:16px;height:16px"><span style="letter-spacing:0.27px">Information</span></div>
<div class="t" style="left:311.60px;top:271.54px;line-height:16px;height:16px"><span style="letter-spacing:-0.67px;margin:0 0.34px 0 -0.34px">8</span><span style="letter-spacing:1.67px;margin:0 -0.84px 0 0.84px">/</span><span style="letter-spacing:-0.67px;margin:0 0.34px 0 -0.34px">8</span><span style="letter-spacing:1.67px;margin:0 -0.84px 0 0.84px">/</span><span style="letter-spacing:-0.67px;margin:0 0.34px 0 -0.34px">2017</span><span style="letter-spacing:-0.33px;margin:0 0.16px 0 -0.16px"> </span><span style="letter-spacing:-0.67px;margin:0 0.34px 0 -0.34px">12</span><span style="letter-spacing:-0.33px;margin:0 0.16px 0 -0.16px">:</span><span style="letter-spacing:-0.67px;margin:0 0.34px 0 -0.34px">09</span><span style="letter-spacing:-0.33px;margin:0 0.16px 0 -0.16px">:</span><span style="letter-spacing:-0.67px;margin:0 0.34px 0 -0.34px">52</span><span style="letter-spacing:-0.33px;margin:0 0.16px 0 -0.16px"> </span><span style="letter-spacing:0.50px;margin:0 -0.25px 0 0.25px">AM</span></div>
<div class="t" style="left:461.50px;top:271.54px;line-height:16px;height:16px"><span style="letter-spacing:0.20px">Windo</span><span style="letter-spacing:-0.33px;margin:0 0.16px 0 -0.16px">...</span></div>
<div class="t" style="left:545.20px;top:271.54px;line-height:16px;height:16px"><span style="letter-spacing:-0.67px;margin:0 0.34px 0 -0.34px">1001</span></div>
<div class="t" style="left:581.30px;top:271.54px;line-height:16px;height:16px"><span style="letter-spacing:0.08px">None</span></div>
<svg class="ic" style="left:209px;top:290px" width="16" height="16" viewBox="0 0 16 16"><circle cx="8" cy="8" r="7.400" fill="#f0f0f0" stroke="#8a8a8a" stroke-width="1"/><circle cx="8" cy="8" r="6.100" fill="url(#ge)"/><path d="M6.900 3h2.200l-.3 6h-1.600z" fill="#fff"/><rect x="7" y="10.200" width="2" height="1.900" rx=".5" fill="#fff"/></svg>
<div class="t" style="left:227.30px;top:290.54px;line-height:16px;height:16px"><span style="letter-spacing:-0.33px;margin:0 0.17px 0 -0.17px">Error</span></div>
<div class="t" style="left:311.60px;top:290.54px;line-height:16px;height:16px"><span style="letter-spacing:-0.67px;margin:0 0.34px 0 -0.34px">8</span><span style="letter-spacing:1.67px;margin:0 -0.84px 0 0.84px">/</span><span style="letter-spacing:-0.67px;margin:0 0.34px 0 -0.34px">8</span><span style="letter-spacing:1.67px;margin:0 -0.84px 0 0.84px">/</span><span style="letter-spacing:-0.67px;margin:0 0.34px 0 -0.34px">2017</span><span style="letter-spacing:-0.33px;margin:0 0.16px 0 -0.16px"> </span><span style="letter-spacing:-0.67px;margin:0 0.34px 0 -0.34px">12</span><span style="letter-spacing:-0.33px;margin:0 0.16px 0 -0.16px">:</span><span style="letter-spacing:-0.67px;margin:0 0.34px 0 -0.34px">09</span><span style="letter-spacing:-0.33px;margin:0 0.16px 0 -0.16px">:</span><span style="letter-spacing:-0.67px;margin:0 0.34px 0 -0.34px">52</span><span style="letter-spacing:-0.33px;margin:0 0.16px 0 -0.16px"> </span><span style="letter-spacing:0.50px;margin:0 -0.25px 0 0.25px">AM</span></div>
<div class="t" style="left:461.50px;top:290.54px;line-height:16px;height:16px"><span style="letter-spacing:0.22px">Applic</span><span style="letter-spacing:-0.33px;margin:0 0.16px 0 -0.16px">...</span></div>
<div class="t" style="left:545.20px;top:290.54px;line-height:16px;height:16px"><span style="letter-spacing:-0.67px;margin:0 0.34px 0 -0.34px">1000</span></div>
<div class="t" style="left:581.30px;top:290.54px;line-height:16px;height:16px">(<span style="letter-spacing:-0.67px;margin:0 0.34px 0 -0.34px">100</span>)</div>
<div class="abs" style="left:202px;top:301px;width:579px;height:1px;background:#696969"></div>
<div class="abs" style="left:202px;top:302px;width:579px;height:4px;background:#f8f8f8"></div>
<div class="abs" style="left:202px;top:306px;width:579px;height:270px;background:#a0a0a0"></div>
<div class="abs" style="left:203px;top:307px;width:578px;height:270px;background:#696969"></div>
<div class="abs" style="left:204px;top:308px;width:577px;height:270px;background:#f0f0f0"></div>
<div class="t" style="left:210.00px;top:311.44px;line-height:16px;height:16px"><span style="letter-spacing:-0.33px;margin:0 0.17px 0 -0.17px">Event</span><span style="letter-spacing:-0.33px;margin:0 0.16px 0 -0.16px"> </span><span style="letter-spacing:-0.67px;margin:0 0.34px 0 -0.34px">1000</span><span style="letter-spacing:-0.33px;margin:0 0.16px 0 -0.16px">,</span><span style="letter-spacing:-0.33px;margin:0 0.16px 0 -0.16px"> </span><span style="letter-spacing:0.21px">Application</span><span style="letter-spacing:-0.33px;margin:0 0.16px 0 -0.16px"> </span><span style="letter-spacing:-0.33px;margin:0 0.17px 0 -0.17px">Error</span></div>
<div class="abs" style="left:207px;top:329px;width:574px;height:2px;background:#a6a6a6"></div>
<div class="abs" style="left:212px;top:359px;width:575px;height:220px;border:1px solid #8e939c;background:#fff"></div>
<div class="abs" style="left:216px;top:362px;width:570px;height:220px;background:#f0f0f0"></div>
<div class="abs" style="left:267px;top:339px;width:47px;height:21px;border:1px solid #8e939c;border-left:0;background:#f0f0f0"></div>
<div class="abs" style="left:212px;top:337px;width:56px;height:24px;border:1px solid #8e939c;border-bottom:0;background:#fff"></div>
<div class="t" style="left:220.30px;top:340.44px;line-height:16px;height:16px"><span style="letter-spacing:-0.38px;margin:0 0.19px 0 -0.19px">General</span></div>
<div class="t" style="left:272.10px;top:342.44px;line-height:16px;height:16px"><span style="letter-spacing:-0.24px">Details</span></div>
<div class="abs" style="left:227px;top:376px;width:560px;height:200px;background:#a0a0a0"></div>
<div class="abs" style="left:228px;top:377px;width:560px;height:200px;background:#696969"></div>
<div class="abs" style="left:229px;top:378px;width:560px;height:200px;background:#f0f0f0"></div>
<div class="t" style="left:229.80px;top:378.74px;line-height:16px;height:16px"><span style="letter-spacing:0.04px">Faulting</span><span style="letter-spacing:-0.33px;margin:0 0.16px 0 -0.16px"> </span><span style="letter-spacing:0.15px">application</span><span style="letter-spacing:-0.33px;margin:0 0.16px 0 -0.16px"> </span>name<span style="letter-spacing:-0.33px;margin:0 0.16px 0 -0.16px">:</span><span style="letter-spacing:-0.33px;margin:0 0.16px 0 -0.16px"> </span><span style="letter-spacing:0.47px;margin:0 -0.23px 0 0.23px">httpd</span><span style="letter-spacing:-0.33px;margin:0 0.16px 0 -0.16px">.</span><span style="letter-spacing:-0.78px;margin:0 0.39px 0 -0.39px">exe</span><span style="letter-spacing:-0.33px;margin:0 0.16px 0 -0.16px">,</span><span style="letter-spacing:-0.33px;margin:0 0.16px 0 -0.16px"> </span><span style="letter-spacing:-0.10px">version</span><span style="letter-spacing:-0.33px;margin:0 0.16px 0 -0.16px">:</span><span style="letter-spacing:-0.33px;margin:0 0.16px 0 -0.16px"> </span><span style="letter-spacing:-0.67px;margin:0 0.34px 0 -0.34px">2</span><span style="letter-spacing:-0.33px;margin:0 0.16px 0 -0.16px">.</span><span style="letter-spacing:-0.67px;margin:0 0.34px 0 -0.34px">4</span><span style="letter-spacing:-0.33px;margin:0 0.16px 0 -0.16px">.</span><span style="letter-spacing:-0.67px;margin:0 0.34px 0 -0.34px">25</span><span style="letter-spacing:-0.33px;margin:0 0.16px 0 -0.16px">.</span><span style="letter-spacing:-0.67px;margin:0 0.34px 0 -0.34px">0</span><span style="letter-spacing:-0.33px;margin:0 0.16px 0 -0.16px">,</span><span style="letter-spacing:-0.33px;margin:0 0.16px 0 -0.16px"> </span><span style="letter-spacing:0.33px;margin:0 -0.17px 0 0.17px">time</span><span style="letter-spacing:-0.33px;margin:0 0.16px 0 -0.16px"> </span><span style="letter-spacing:0.07px">stamp</span><span style="letter-spacing:-0.33px;margin:0 0.16px 0 -0.16px">:</span><span style="letter-spacing:-0.33px;margin:0 0.16px 0 -0.16px"> </span><span style="letter-spacing:-0.67px;margin:0 0.34px 0 -0.34px">0</span><span style="letter-spacing:-1.00px;margin:0 0.50px 0 -0.50px">x</span><span style="letter-spacing:-0.67px;margin:0 0.34px 0 -0.34px">58550</span><span style="letter-spacing:-0.67px;margin:0 0.34px 0 -0.34px">e</span><span style="letter-spacing:-0.67px;margin:0 0.34px 0 -0.34px">9</span><span style="letter-spacing:0.67px;margin:0 -0.34px 0 0.34px">f</span></div>
<div class="t" style="left:229.80px;top:393.74px;line-height:16px;height:16px"><span style="letter-spacing:0.04px">Faulting</span><span style="letter-spacing:-0.33px;margin:0 0.16px 0 -0.16px"> </span><span style="letter-spacing:0.27px">module</span><span style="letter-spacing:-0.33px;margin:0 0.16px 0 -0.16px"> </span>name<span style="letter-spacing:-0.33px;margin:0 0.16px 0 -0.16px">:</span><span style="letter-spacing:-0.33px;margin:0 0.16px 0 -0.16px"> </span><span style="letter-spacing:0.55px;margin:0 -0.28px 0 0.28px">mod</span><span style="letter-spacing:-1.67px;margin:0 0.84px 0 -0.84px">_</span><span style="letter-spacing:-0.07px">proxy</span><span style="letter-spacing:-0.33px;margin:0 0.16px 0 -0.16px">.</span><span style="letter-spacing:-0.34px;margin:0 0.17px 0 -0.17px">so</span><span style="letter-spacing:-0.33px;margin:0 0.16px 0 -0.16px">,</span><span style="letter-spacing:-0.33px;margin:0 0.16px 0 -0.16px"> </span><span style="letter-spacing:-0.10px">version</span><span style="letter-spacing:-0.33px;margin:0 0.16px 0 -0.16px">:</span><span style="letter-spacing:-0.33px;margin:0 0.16px 0 -0.16px"> </span><span style="letter-spacing:-0.67px;margin:0 0.34px 0 -0.34px">2</span><span style="letter-spacing:-0.33px;margin:0 0.16px 0 -0.16px">.</span><span style="letter-spacing:-0.67px;margin:0 0.34px 0 -0.34px">4</span><span style="letter-spacing:-0.33px;margin:0 0.16px 0 -0.16px">.</span><span style="letter-spacing:-0.67px;margin:0 0.34px 0 -0.34px">25</span><span style="letter-spacing:-0.33px;margin:0 0.16px 0 -0.16px">.</span><span style="letter-spacing:-0.67px;margin:0 0.34px 0 -0.34px">0</span><span style="letter-spacing:-0.33px;margin:0 0.16px 0 -0.16px">,</span><span style="letter-spacing:-0.33px;margin:0 0.16px 0 -0.16px"> </span><span style="letter-spacing:0.33px;margin:0 -0.17px 0 0.17px">time</span><span style="letter-spacing:-0.33px;margin:0 0.16px 0 -0.16px"> </span><span style="letter-spacing:0.07px">stamp</span><span style="letter-spacing:-0.33px;margin:0 0.16px 0 -0.16px">:</span><span style="letter-spacing:-0.33px;margin:0 0.16px 0 -0.16px"> </span><span style="letter-spacing:-0.67px;margin:0 0.34px 0 -0.34px">0</span><span style="letter-spacing:-1.00px;margin:0 0.50px 0 -0.50px">x</span><span style="letter-spacing:-0.67px;margin:0 0.34px 0 -0.34px">58551063</span></div>
<div class="t" style="left:229.80px;top:408.74px;line-height:16px;height:16px"><span style="letter-spacing:-0.19px">Exception</span><span style="letter-spacing:-0.33px;margin:0 0.16px 0 -0.16px"> </span>code<span style="letter-spacing:-0.33px;margin:0 0.16px 0 -0.16px">:</span><span style="letter-spacing:-0.33px;margin:0 0.16px 0 -0.16px"> </span><span style="letter-spacing:-0.67px;margin:0 0.34px 0 -0.34px">0</span><span style="letter-spacing:-0.50px;margin:0 0.25px 0 -0.25px">xc</span><span style="letter-spacing:-0.67px;margin:0 0.34px 0 -0.34px">0000005</span></div>
<div class="t" style="left:229.80px;top:423.74px;line-height:16px;height:16px"><span style="letter-spacing:-0.13px">Fault</span><span style="letter-spacing:-0.33px;margin:0 0.16px 0 -0.16px"> </span><span style="letter-spacing:0.15px">offset</span><span style="letter-spacing:-0.33px;margin:0 0.16px 0 -0.16px">:</span><span style="letter-spacing:-0.33px;margin:0 0.16px 0 -0.16px"> </span><span style="letter-spacing:-0.67px;margin:0 0.34px 0 -0.34px">0</span><span style="letter-spacing:-1.00px;margin:0 0.50px 0 -0.50px">x</span><span style="letter-spacing:-0.67px;margin:0 0.34px 0 -0.34px">0000000000007</span><span style="letter-spacing:-0.67px;margin:0 0.34px 0 -0.34px">a</span><span style="letter-spacing:-0.67px;margin:0 0.34px 0 -0.34px">4</span><span style="letter-spacing:0.67px;margin:0 -0.34px 0 0.34px">f</span></div>
<div class="t" style="left:229.80px;top:438.74px;line-height:16px;height:16px"><span style="letter-spacing:0.04px">Faulting</span><span style="letter-spacing:-0.33px;margin:0 0.16px 0 -0.16px"> </span><span style="letter-spacing:-0.29px">process</span><span style="letter-spacing:-0.33px;margin:0 0.16px 0 -0.16px"> </span><span style="letter-spacing:0.33px;margin:0 -0.16px 0 0.16px">id</span><span style="letter-spacing:-0.33px;margin:0 0.16px 0 -0.16px">:</span><span style="letter-spacing:-0.33px;margin:0 0.16px 0 -0.16px"> </span><span style="letter-spacing:-0.67px;margin:0 0.34px 0 -0.34px">0</span><span style="letter-spacing:-0.22px">xcb</span><span style="letter-spacing:-0.67px;margin:0 0.34px 0 -0.34px">8</span></div>
<div class="t" style="left:229.80px;top:453.74px;line-height:16px;height:16px"><span style="letter-spacing:0.04px">Faulting</span><span style="letter-spacing:-0.33px;margin:0 0.16px 0 -0.16px"> </span><span style="letter-spacing:0.15px">application</span><span style="letter-spacing:-0.33px;margin:0 0.16px 0 -0.16px"> </span><span style="letter-spacing:-0.07px">start</span><span style="letter-spacing:-0.33px;margin:0 0.16px 0 -0.16px"> </span><span style="letter-spacing:0.33px;margin:0 -0.17px 0 0.17px">time</span><span style="letter-spacing:-0.33px;margin:0 0.16px 0 -0.16px">:</span><span style="letter-spacing:-0.33px;margin:0 0.16px 0 -0.16px"> </span><span style="letter-spacing:-0.67px;margin:0 0.34px 0 -0.34px">0</span><span style="letter-spacing:-1.00px;margin:0 0.50px 0 -0.50px">x</span><span style="letter-spacing:-0.67px;margin:0 0.34px 0 -0.34px">01</span><span style="letter-spacing:0.33px;margin:0 -0.16px 0 0.16px">d</span><span style="letter-spacing:-0.67px;margin:0 0.34px 0 -0.34px">30</span><span style="letter-spacing:0.34px;margin:0 -0.17px 0 0.17px">fc</span><span style="letter-spacing:-0.67px;margin:0 0.34px 0 -0.34px">18</span>c<span style="letter-spacing:-0.67px;margin:0 0.34px 0 -0.34px">38741</span><span style="letter-spacing:0.33px;margin:0 -0.16px 0 0.16px">d</span></div>
<div class="t" style="left:229.80px;top:468.74px;line-height:16px;height:16px"><span style="letter-spacing:0.04px">Faulting</span><span style="letter-spacing:-0.33px;margin:0 0.16px 0 -0.16px"> </span><span style="letter-spacing:0.15px">application</span><span style="letter-spacing:-0.33px;margin:0 0.16px 0 -0.16px"> </span><span style="letter-spacing:0.16px">path</span><span style="letter-spacing:-0.33px;margin:0 0.16px 0 -0.16px">:</span><span style="letter-spacing:-0.33px;margin:0 0.16px 0 -0.16px"> </span><span style="letter-spacing:-1.67px;margin:0 0.84px 0 -0.84px">C</span><span style="letter-spacing:0.67px;margin:0 -0.34px 0 0.34px">:\</span><span style="letter-spacing:-0.11px">Apache</span><span style="letter-spacing:-0.67px;margin:0 0.34px 0 -0.34px">24</span><span style="letter-spacing:1.67px;margin:0 -0.84px 0 0.84px">\</span><span style="letter-spacing:0.33px;margin:0 -0.16px 0 0.16px">bin</span><span style="letter-spacing:1.67px;margin:0 -0.84px 0 0.84px">\</span><span style="letter-spacing:0.47px;margin:0 -0.23px 0 0.23px">httpd</span><span style="letter-spacing:-0.33px;margin:0 0.16px 0 -0.16px">.</span><span style="letter-spacing:-0.78px;margin:0 0.39px 0 -0.39px">exe</span></div>
<div class="t" style="left:229.80px;top:483.74px;line-height:16px;height:16px"><span style="letter-spacing:0.04px">Faulting</span><span style="letter-spacing:-0.33px;margin:0 0.16px 0 -0.16px"> </span><span style="letter-spacing:0.27px">module</span><span style="letter-spacing:-0.33px;margin:0 0.16px 0 -0.16px"> </span><span style="letter-spacing:0.16px">path</span><span style="letter-spacing:-0.33px;margin:0 0.16px 0 -0.16px">:</span><span style="letter-spacing:-0.33px;margin:0 0.16px 0 -0.16px"> </span><span style="letter-spacing:-1.67px;margin:0 0.84px 0 -0.84px">C</span><span style="letter-spacing:0.67px;margin:0 -0.34px 0 0.34px">:\</span><span style="letter-spacing:-0.11px">Apache</span><span style="letter-spacing:-0.67px;margin:0 0.34px 0 -0.34px">24</span><span style="letter-spacing:1.67px;margin:0 -0.84px 0 0.84px">\</span><span style="letter-spacing:0.09px">modules</span><span style="letter-spacing:1.67px;margin:0 -0.84px 0 0.84px">\</span><span style="letter-spacing:0.55px;margin:0 -0.28px 0 0.28px">mod</span><span style="letter-spacing:-1.67px;margin:0 0.84px 0 -0.84px">_</span><span style="letter-spacing:-0.07px">proxy</span><span style="letter-spacing:-0.33px;margin:0 0.16px 0 -0.16px">.</span><span style="letter-spacing:-0.34px;margin:0 0.17px 0 -0.17px">so</span></div>
<div class="t" style="left:229.80px;top:498.74px;line-height:16px;height:16px"><span style="letter-spacing:-0.17px">Report</span><span style="letter-spacing:-0.33px;margin:0 0.16px 0 -0.16px"> </span>Id<span style="letter-spacing:-0.33px;margin:0 0.16px 0 -0.16px">:</span><span style="letter-spacing:-0.33px;margin:0 0.16px 0 -0.16px"> </span><span style="letter-spacing:-0.22px">cca</span><span style="letter-spacing:-0.67px;margin:0 0.34px 0 -0.34px">1</span>ef<span style="letter-spacing:-0.67px;margin:0 0.34px 0 -0.34px">23</span><span style="letter-spacing:1.00px;margin:0 -0.50px 0 0.50px">-</span><span style="letter-spacing:-0.67px;margin:0 0.34px 0 -0.34px">7</span><span style="letter-spacing:0.33px;margin:0 -0.16px 0 0.16px">bb</span><span style="letter-spacing:-0.67px;margin:0 0.34px 0 -0.34px">4</span><span style="letter-spacing:1.00px;margin:0 -0.50px 0 0.50px">-</span><span style="letter-spacing:-0.23px">11</span><span style="letter-spacing:-0.67px;margin:0 0.34px 0 -0.34px">e</span><span style="letter-spacing:-0.67px;margin:0 0.34px 0 -0.34px">7</span><span style="letter-spacing:1.00px;margin:0 -0.50px 0 0.50px">-</span><span style="letter-spacing:-0.67px;margin:0 0.34px 0 -0.34px">80</span><span style="letter-spacing:0.33px;margin:0 -0.16px 0 0.16px">bd</span><span style="letter-spacing:1.00px;margin:0 -0.50px 0 0.50px">-</span><span style="letter-spacing:-0.67px;margin:0 0.34px 0 -0.34px">00505684</span><span style="letter-spacing:0.33px;margin:0 -0.16px 0 0.16px">d</span><span style="letter-spacing:-0.67px;margin:0 0.34px 0 -0.34px">212</span></div>
<div class="t" style="left:229.80px;top:513.74px;line-height:16px;height:16px"><span style="letter-spacing:0.04px">Faulting</span><span style="letter-spacing:-0.33px;margin:0 0.16px 0 -0.16px"> </span><span style="letter-spacing:-0.19px">package</span><span style="letter-spacing:-0.33px;margin:0 0.16px 0 -0.16px"> </span><span style="letter-spacing:0.41px;margin:0 -0.21px 0 0.21px">full</span><span style="letter-spacing:-0.33px;margin:0 0.16px 0 -0.16px"> </span>name<span style="letter-spacing:-0.33px;margin:0 0.16px 0 -0.16px">:</span></div>
<div class="t" style="left:229.80px;top:528.74px;line-height:16px;height:16px"><span style="letter-spacing:0.04px">Faulting</span><span style="letter-spacing:-0.33px;margin:0 0.16px 0 -0.16px"> </span><span style="letter-spacing:-0.19px">package</span><span style="letter-spacing:1.00px;margin:0 -0.50px 0 0.50px">-</span><span style="letter-spacing:-0.09px">relative</span><span style="letter-spacing:-0.33px;margin:0 0.16px 0 -0.16px"> </span><span style="letter-spacing:0.15px">application</span><span style="letter-spacing:-0.33px;margin:0 0.16px 0 -0.16px"> </span><span style="letter-spacing:-0.50px;margin:0 0.25px 0 -0.25px">ID</span><span style="letter-spacing:-0.33px;margin:0 0.16px 0 -0.16px">:</span></div>
</body></html>
